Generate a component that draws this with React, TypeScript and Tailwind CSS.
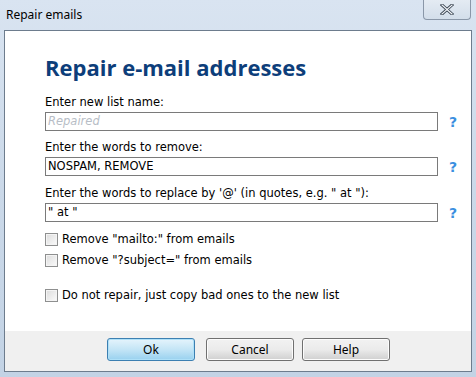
import React from "react";

const Q = () => (
  <span className="w-[30px] text-center text-[#3b8fe0] font-bold text-[14px] leading-none" style={{ fontFamily: "'DejaVu Sans', sans-serif" }}>?</span>
);

const Check = ({ label }: { label: string }) => (
  <div className="flex items-center h-[13px]">
    <div className="w-[13px] h-[13px] border border-[#8e8f8f] bg-gradient-to-br from-[#dcdcdc] to-[#fbfbfb] shadow-[inset_0_0_0_1px_#f4f4f4] shrink-0" />
    <span className="ml-[4px] text-[11.5px] text-black">{label}</span>
  </div>
);

const Btn = ({ label, primary }: { label: string; primary?: boolean }) => (
  <div
    className={
      "w-[88px] h-[23px] rounded-[3px] flex items-center justify-center text-[12px] text-black " +
      (primary
        ? "border border-[#3c7fb1] bg-gradient-to-b from-[#e5f4fc] via-[#c4e5f6] to-[#98d1ef] shadow-[inset_0_0_0_1px_#aee0f8]"
        : "border border-[#707070] bg-gradient-to-b from-[#f2f2f2] via-[#ebebeb] to-[#cfcfcf] shadow-[inset_0_0_0_1px_#fcfcfc]")
    }
    style={{ fontFamily: "'Noto Sans', sans-serif" }}
  >
    {label}
  </div>
);

const Field = ({ label, children, mt }: { label: string; children: React.ReactNode; mt: string }) => (
  <div className={mt}>
    <div className="text-[11.5px] h-[15px] leading-[15px]">{label}</div>
    <div className="flex items-center mt-[2px]">
      <div className="w-[393px] h-[19px] border border-[#7a7a7a] flex items-center pl-[2px] text-[11.5px]">{children}</div>
      <Q />
    </div>
  </div>
);

export default function App() {
  return (
    <div className="w-[476px] h-[377px] bg-gradient-to-b from-[#d9e4f1] via-[#cbd9e9] to-[#c3d3e5] flex flex-col relative overflow-hidden" style={{ fontFamily: "'DejaVu Sans', sans-serif" }}>
      <div className="h-[30px] flex items-center pl-[6px] shrink-0">
        <span className="text-[12px] text-black" style={{ fontFamily: "'Noto Sans', sans-serif" }}>Repair emails</span>
      </div>
      <div className="absolute right-[5px] top-0 w-[48px] h-[20px] border border-t-0 border-[#8a97a8] rounded-b-[4px] bg-gradient-to-b from-[#e4ebf3] to-[#d3deea] flex items-center justify-center">
        <svg width="14" height="11" viewBox="0 0 14 11">
          <path d="M2 1 L12 10 M12 1 L2 10" stroke="#3a4552" strokeWidth="3" strokeLinecap="square" />
          <path d="M2 1 L12 10 M12 1 L2 10" stroke="#f3f6fa" strokeWidth="1.2" strokeLinecap="square" />
        </svg>
      </div>
      <div className="mx-[4px] h-[342px] border border-[#6d7c8d] bg-white flex flex-col">
        <div className="flex-1 pl-[40px] pr-[3px]">
          <div className="mt-[21px] h-[30px] text-[22px] font-bold text-[#0d3e7a] leading-[30px]" style={{ fontFamily: "'Open Sans', sans-serif" }}>
            Repair e-mail addresses
          </div>
          <Field label="Enter new list name:" mt="mt-[13px]">
            <span className="italic text-[#b7bdc6]">Repaired</span>
          </Field>
          <Field label="Enter the words to remove:" mt="mt-[9px]">NOSPAM, REMOVE</Field>
          <Field label={'Enter the words to replace by \'@\' (in quotes, e.g. " at "):'} mt="mt-[10px]">" at "</Field>
          <div className="mt-[11px] flex flex-col gap-[8px]">
            <Check label={'Remove "mailto:" from emails'} />
            <Check label={'Remove "?subject=" from emails'} />
          </div>
          <div className="mt-[22px]">
            <Check label="Do not repair, just copy bad ones to the new list" />
          </div>
        </div>
        <div className="h-[40px] bg-[#f0f0f0] flex items-start pt-[7px] pl-[102px]">
          <Btn label="Ok" primary />
          <div className="w-[11px]" />
          <Btn label="Cancel" />
          <div className="w-[8px]" />
          <Btn label="Help" />
        </div>
      </div>
    </div>
  );
}
